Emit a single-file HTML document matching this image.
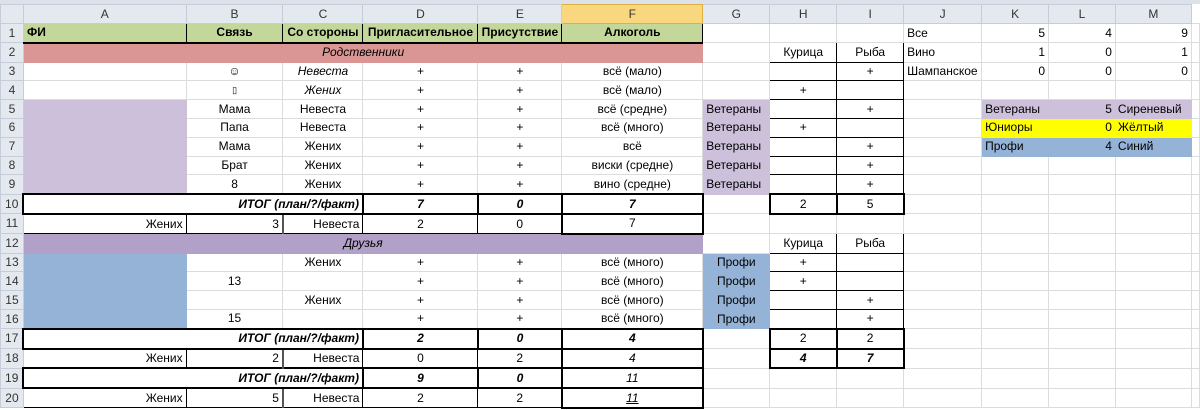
<!DOCTYPE html>
<html><head><meta charset="utf-8">
<style>
body{margin:0;background:#fff;width:1200px;height:410px;overflow:hidden;font-family:"Liberation Sans",sans-serif;font-size:12px;}
.top{height:4px;background:#dde2ea;}
table{border-collapse:collapse;table-layout:fixed;}
td{border:1px solid #dadcdd;height:17.8px;padding:0 3px;white-space:nowrap;overflow:visible;text-align:center;color:#000;line-height:17px;}
tr.h td{background:#e4e9f0;border-color:#c5cdd8;color:#333;height:18px;}
tr.h td.sel{background:#f9d77e;border-color:#e0b040;}
td.rh{background:#e4e9f0;border-color:#c5cdd8;color:#333;text-align:center;padding:0;}
.l{text-align:left}.r{text-align:right}
.g{background:#c4d79b;border:1px solid #000;border-bottom:2px solid #000;font-weight:bold}
.red{background:#da9694;border-color:#da9694}.pur{background:#b1a0c7;border-color:#b1a0c7}.lil{background:#ccc0da;border-color:#ccc0da}.yel{background:#ffff00;border-color:#ffff00}.blu{background:#95b3d7;border-color:#95b3d7}
.i{font-style:italic}.bi{font-weight:bold;font-style:italic}
.tb{border:1px solid #000}
.T{border:2px solid #000}
.u{text-decoration:underline}
</style></head><body>
<div class="top"></div>
<table>
<colgroup><col style="width:23px"><col style="width:163px"><col style="width:97px"><col style="width:80px"><col style="width:115px"><col style="width:84px"><col style="width:141px"><col style="width:67px"><col style="width:67px"><col style="width:67px"><col style="width:78px"><col style="width:67px"><col style="width:67px"><col style="width:76px"><col style="width:8px"></colgroup>
<tr class="h"><td></td><td>A</td><td>B</td><td>C</td><td>D</td><td>E</td><td class="sel">F</td><td>G</td><td>H</td><td>I</td><td>J</td><td>K</td><td>L</td><td>M</td><td style="background:#fff;border:0"></td></tr>
<tr><td class="rh">1</td><td class="g l">ФИ</td><td class="g">Связь</td><td class="g">Со стороны</td><td class="g">Пригласительное</td><td class="g">Присутствие</td><td class="g">Алкоголь</td><td></td><td></td><td></td><td class="l">Все</td><td class="r">5</td><td class="r">4</td><td class="r">9</td><td></td></tr>
<tr><td class="rh">2</td><td colspan="6" class="red i">Родственники</td><td></td><td class="tb">Курица</td><td class="tb">Рыба</td><td class="l">Вино</td><td class="r">1</td><td class="r">0</td><td class="r">1</td><td></td></tr>
<tr><td class="rh">3</td><td></td><td>☺</td><td class="i">Невеста</td><td>+</td><td>+</td><td>всё (мало)</td><td></td><td class="tb"></td><td class="tb">+</td><td class="l" style="overflow:hidden">Шампанское</td><td class="r">0</td><td class="r">0</td><td class="r">0</td><td></td></tr>
<tr><td class="rh">4</td><td></td><td style="font-size:9px">▯</td><td class="i">Жених</td><td>+</td><td>+</td><td>всё (мало)</td><td></td><td class="tb">+</td><td class="tb"></td><td></td><td></td><td></td><td></td><td></td></tr>
<tr><td class="rh">5</td><td class="lil"></td><td>Мама</td><td>Невеста</td><td>+</td><td>+</td><td>всё (средне)</td><td class="lil l">Ветераны</td><td class="tb"></td><td class="tb">+</td><td></td><td class="lil l">Ветераны</td><td class="lil r">5</td><td class="lil l" style="padding-left:2px">Сиреневый</td><td></td></tr>
<tr><td class="rh">6</td><td class="lil"></td><td>Папа</td><td>Невеста</td><td>+</td><td>+</td><td>всё (много)</td><td class="lil l">Ветераны</td><td class="tb">+</td><td class="tb"></td><td></td><td class="yel l">Юниоры</td><td class="yel r">0</td><td class="yel l" style="padding-left:2px">Жёлтый</td><td></td></tr>
<tr><td class="rh">7</td><td class="lil"></td><td>Мама</td><td>Жених</td><td>+</td><td>+</td><td>всё</td><td class="lil l">Ветераны</td><td class="tb"></td><td class="tb">+</td><td></td><td class="blu l">Профи</td><td class="blu r">4</td><td class="blu l" style="padding-left:2px">Синий</td><td></td></tr>
<tr><td class="rh">8</td><td class="lil"></td><td>Брат</td><td>Жених</td><td>+</td><td>+</td><td>виски (средне)</td><td class="lil l">Ветераны</td><td class="tb"></td><td class="tb">+</td><td></td><td></td><td></td><td></td><td></td></tr>
<tr><td class="rh">9</td><td class="lil"></td><td>8</td><td>Жених</td><td>+</td><td>+</td><td>вино (средне)</td><td class="lil l">Ветераны</td><td class="tb"></td><td class="tb">+</td><td></td><td></td><td></td><td></td><td></td></tr>
<tr><td class="rh">10</td><td colspan="3" class="T r bi">ИТОГ (план/?/факт)</td><td class="T bi">7</td><td class="T bi">0</td><td class="T bi">7</td><td></td><td class="T">2</td><td class="T">5</td><td></td><td></td><td></td><td></td><td></td></tr>
<tr><td class="rh">11</td><td class="tb r">Жених</td><td class="tb r" style="border-right:2px solid #555">3</td><td class="tb r">Невеста</td><td class="tb">2</td><td class="tb">0</td><td class="T">7</td><td></td><td></td><td></td><td></td><td></td><td></td><td></td><td></td></tr>
<tr><td class="rh">12</td><td colspan="6" class="pur i">Друзья</td><td></td><td class="tb">Курица</td><td class="tb">Рыба</td><td></td><td></td><td></td><td></td><td></td></tr>
<tr><td class="rh">13</td><td class="blu"></td><td></td><td>Жених</td><td>+</td><td>+</td><td>всё (много)</td><td class="blu">Профи</td><td class="tb">+</td><td class="tb"></td><td></td><td></td><td></td><td></td><td></td></tr>
<tr><td class="rh">14</td><td class="blu"></td><td>13</td><td></td><td>+</td><td>+</td><td>всё (много)</td><td class="blu">Профи</td><td class="tb">+</td><td class="tb"></td><td></td><td></td><td></td><td></td><td></td></tr>
<tr><td class="rh">15</td><td class="blu"></td><td></td><td>Жених</td><td>+</td><td>+</td><td>всё (много)</td><td class="blu">Профи</td><td class="tb"></td><td class="tb">+</td><td></td><td></td><td></td><td></td><td></td></tr>
<tr><td class="rh">16</td><td class="blu"></td><td>15</td><td></td><td>+</td><td>+</td><td>всё (много)</td><td class="blu">Профи</td><td class="tb"></td><td class="tb">+</td><td></td><td></td><td></td><td></td><td></td></tr>
<tr><td class="rh">17</td><td colspan="3" class="T r bi">ИТОГ (план/?/факт)</td><td class="T bi">2</td><td class="T bi">0</td><td class="T bi">4</td><td></td><td class="T">2</td><td class="T">2</td><td></td><td></td><td></td><td></td><td></td></tr>
<tr><td class="rh">18</td><td class="tb r">Жених</td><td class="tb r" style="border-right:2px solid #555">2</td><td class="tb r">Невеста</td><td class="tb">0</td><td class="tb">2</td><td class="T i">4</td><td></td><td class="T bi">4</td><td class="T bi">7</td><td></td><td></td><td></td><td></td><td></td></tr>
<tr><td class="rh">19</td><td colspan="3" class="T r bi">ИТОГ (план/?/факт)</td><td class="T bi">9</td><td class="T bi">0</td><td class="T i">11</td><td></td><td></td><td></td><td></td><td></td><td></td><td></td><td></td></tr>
<tr><td class="rh">20</td><td class="tb r">Жених</td><td class="tb r" style="border-right:2px solid #555">5</td><td class="tb r">Невеста</td><td class="tb">2</td><td class="tb">2</td><td class="T i u">11</td><td></td><td></td><td></td><td></td><td></td><td></td><td></td><td></td></tr>
</table>
</body></html>
